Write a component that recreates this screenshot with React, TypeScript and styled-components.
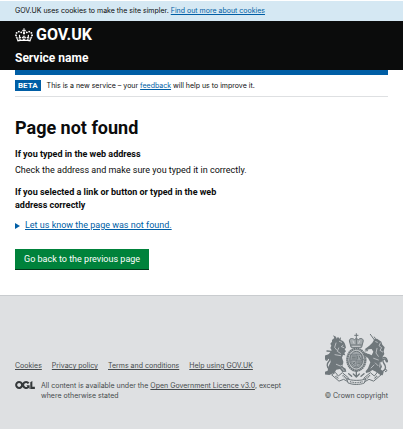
import React from 'react';
import styled, { createGlobalStyle } from 'styled-components';

const GlobalStyle = createGlobalStyle`
  * { box-sizing: border-box; }
  html { background: #dee0e2; }
  body {
    margin: 0;
    background: #fff;
    color: #0b0c0c;
    font-family: Roboto, Arial, sans-serif;
    font-size: 9px;
    line-height: 13px;
  }
  h1, h2, p, ul { margin: 0; padding: 0; }
`;

const Link = styled.a`
  color: #005ea5;
  text-decoration: underline;
`;

const CookieBanner = styled.div`
  padding: 5px 15px;
  border-top: 1px solid #fff;
  background: #d5e8f3;
  font-family: Inter, Arial, sans-serif;
  font-size: 7px;
  line-height: 10px;
`;

const Header = styled.header`
  padding: 5px 15px 4px;
  background: #0b0c0c;
`;

const LogoLink = styled.a`
  display: flex;
  align-items: center;
  gap: 3px;
  width: max-content;
  color: #fff;
  font-size: 16px;
  font-weight: 700;
  line-height: 18px;
  text-decoration: none;
`;

const ServiceLink = styled.a`
  display: block;
  width: max-content;
  margin-top: 6px;
  color: #fff;
  font-size: 12px;
  font-weight: 700;
  line-height: 16px;
  text-decoration: none;
`;

const Container = styled.div`
  margin: 0 15px;
`;

const HeaderBar = styled.div`
  height: 5px;
  background: #005ea5;
`;

const PhaseBanner = styled.div`
  display: flex;
  align-items: center;
  gap: 6px;
  padding: 5px 0;
  border-bottom: 1px solid #dee0e2;
  font-family: Inter, Arial, sans-serif;
  font-size: 7px;
  line-height: 11px;
`;

const PhaseTag = styled.strong`
  padding: 0 3px;
  background: #005ea5;
  color: #fff;
  font-family: Roboto, Arial, sans-serif;
  font-size: 8px;
`;

const Main = styled.main`
  padding: 19px 0 25px;
`;

const Title = styled.h1`
  margin-bottom: 8px;
  font-size: 18px;
  font-weight: 700;
  line-height: 24px;
`;

const Subtitle = styled.h2`
  max-width: 230px;
  font-size: 9px;
  font-weight: 700;
`;

const Paragraph = styled.p`
  margin: 3px 0 9px;
`;

const Details = styled.details`
  margin: 7px 0 17px;
`;

const Summary = styled.summary`
  display: flex;
  align-items: center;
  gap: 5px;
  width: max-content;
  color: #005ea5;
  cursor: pointer;
  list-style: none;
`;

const SummaryText = styled.span`
  text-decoration: underline;
`;

const Button = styled.button`
  display: block;
  padding: 4px 9px;
  border: 0;
  background: #00823b;
  box-shadow: inset 0 -1px 0 #003618;
  color: #fff;
  font: inherit;
  cursor: pointer;
`;

const Footer = styled.footer`
  display: flex;
  justify-content: space-between;
  align-items: flex-end;
  gap: 20px;
  padding: 37px 15px 28px;
  border-top: 1px solid #c9cccf;
  background: #dee0e2;
  color: #454a4c;
  font-family: Inter, Arial, sans-serif;
  font-size: 7px;
  line-height: 10px;
`;

const FooterMeta = styled.div`
  flex: 1;
`;

const FooterLinks = styled.ul`
  display: flex;
  flex-wrap: wrap;
  gap: 4px 10px;
  margin-bottom: 10px;
  list-style: none;
`;

const FooterLink = styled.a`
  color: #454a4c;
`;

const Licence = styled.div`
  display: flex;
  align-items: flex-start;
  gap: 6px;
`;

const LicenceText = styled.div`
  flex: 1;
  max-width: 260px;
`;

const Copyright = styled.a`
  display: flex;
  flex-direction: column;
  align-items: flex-end;
  gap: 6px;
  color: #454a4c;
  text-decoration: none;
`;

const Crown = () => (
  <svg width="18" height="14" viewBox="0 0 132 97" fill="#fff" aria-hidden="true">
    <path
      fillRule="evenodd"
      d="M25 30.2c3.5 1.5 7.7-.2 9.1-3.7 1.5-3.6-.2-7.8-3.9-9.2-3.6-1.4-7.6.3-9.1 3.9-1.4 3.5.3 7.5 3.9 9zM9 39.5c3.6 1.5 7.8-.2 9.2-3.7 1.5-3.6-.2-7.8-3.9-9.1-3.6-1.5-7.6.2-9.1 3.8-1.4 3.5.3 7.5 3.8 9zM4.4 57.2c3.5 1.5 7.7-.2 9.1-3.8 1.5-3.6-.2-7.7-3.9-9.1-3.5-1.5-7.6.3-9.1 3.8-1.4 3.5.3 7.6 3.9 9.1zm38.3-21.4c3.5 1.5 7.7-.2 9.1-3.8 1.5-3.6-.2-7.7-3.9-9.1-3.6-1.5-7.6.3-9.1 3.8-1.3 3.6.4 7.7 3.9 9.1zm64.4-5.6c-3.6 1.5-7.8-.2-9.1-3.7-1.5-3.6.2-7.8 3.8-9.2 3.6-1.4 7.7.3 9.2 3.9 1.3 3.5-.4 7.5-3.9 9zm15.9 9.3c-3.6 1.5-7.7-.2-9.1-3.7-1.5-3.6.2-7.8 3.7-9.1 3.6-1.5 7.7.2 9.2 3.8 1.5 3.5-.3 7.5-3.8 9zm4.7 17.7c-3.6 1.5-7.8-.2-9.2-3.8-1.5-3.6.2-7.7 3.9-9.1 3.6-1.5 7.7.3 9.2 3.8 1.3 3.5-.4 7.6-3.9 9.1zM89.3 35.8c-3.6 1.5-7.8-.2-9.2-3.8-1.4-3.6.2-7.7 3.9-9.1 3.6-1.5 7.7.3 9.2 3.8 1.4 3.6-.3 7.7-3.9 9.1zM69.7 17.7l8.9 4.7V9.3l-8.9 2.8c-.2-.3-.5-.6-.9-.9L72.4 0H59.6l3.5 11.2c-.3.3-.6.5-.9.9l-8.8-2.8v13.1l8.8-4.7c.3.3.6.7.9.9l-5 15.4v.1c-.2.8-.4 1.6-.4 2.4 0 4.1 3.1 7.5 7 8.1h.2c.3 0 .7.1 1 .1.4 0 .7 0 1-.1h.2c4-.6 7.1-4.1 7.1-8.1 0-.8-.1-1.7-.4-2.4V34l-5.1-15.4c.4-.2.7-.6 1-.9zM66 92.8c16.9 0 32.8 1.1 47.1 3.2 4-16.9 8.9-26.7 14-33.5l-9.6-3.4c1 4.9 1.1 7.2 0 10.2-1.5-1.4-3-4.3-4.2-8.7L108.6 76c2.8-2 5-3.2 7.5-3.3-4.4 9.4-10 11.9-13.6 11.2-4.3-.8-6.3-4.6-5.6-7.9 1-4.7 5.7-5.9 8-.5 4.3-8.7-3-11.4-7.6-8.8 7.1-7.2 7.9-13.5 2.1-21.1-8 6.1-8.1 12.3-4.5 20.8-4.7-5.4-12.1-2.5-9.5 6.2 3.4-5.2 7.9-2 7.2 3.1-.6 4.3-6.4 7.8-13.5 7.2-10.3-.9-10.9-8-11.2-13.8 2.5-.5 7.1 1.8 11 7.3L80.2 60c-4.1 4.4-8 5.3-12.3 5.4 1.4-4.4 8-11.6 8-11.6H55.5s6.4 7.2 7.9 11.6c-4.2-.1-8-1-12.3-5.4l1.4 16.4c3.9-5.5 8.5-7.7 10.9-7.3-.3 5.8-.9 12.8-11.1 13.8-7.2.6-12.9-2.9-13.5-7.2-.7-5 3.8-8.3 7.1-3.1 2.7-8.7-4.6-11.6-9.4-6.2 3.7-8.5 3.6-14.7-4.6-20.8-5.8 7.6-5 13.9 2.2 21.1-4.7-2.6-11.9.1-7.7 8.8 2.3-5.5 7.1-4.2 8.1.5.7 3.3-1.3 7.1-5.7 7.9-3.5.7-9-1.8-13.5-11.2 2.5.1 4.7 1.3 7.5 3.3l-4.7-15.4c-1.2 4.4-2.7 7.2-4.3 8.7-1.1-3-.9-5.3 0-10.2l-9.5 3.4c5 6.9 9.9 16.7 14 33.5 14.8-2.1 30.8-3.2 47.7-3.2z"
    />
  </svg>
);

const LicenceLogo = () => (
  <svg width="20" height="8" viewBox="0 0 483.2 195.7" fill="#35393b" role="img" aria-label="Open Government Licence">
    <path d="M421.5 142.8V.1l-50.7 32.3v161.1h112.4v-50.7zm-122.3-9.6A47.12 47.12 0 0 1 221 97.8c0-26 21.1-47.1 47.1-47.1 16.7 0 31.4 8.7 39.7 21.8l42.7-27.2A97.63 97.63 0 0 0 268.1 0c-36.5 0-68.3 20.1-85.1 49.7A98 98 0 0 0 97.8 0C43.9 0 0 43.9 0 97.8s43.9 97.8 97.8 97.8c36.5 0 68.3-20.1 85.1-49.7a97.76 97.76 0 0 0 149.6 25.4l19.4 22.2h3v-87.8h-80l24.3 27.5zM97.8 145c-26 0-47.1-21.1-47.1-47.1s21.1-47.1 47.1-47.1 47.1 21.1 47.1 47.1S123.8 145 97.8 145" />
  </svg>
);

const RoyalArms = () => (
  <svg width="63" height="52" viewBox="29 23 189 156" fill="none" stroke="#6f777b" strokeWidth="3" strokeLinecap="round" strokeLinejoin="round" aria-hidden="true">
    {/* crown */}
    <path fill="#a4aaad" d="M107 65l-4-15c-4-10 8-14 14-7l6-4 6 4c6-7 18-3 14 7l-4 15zM123 25v13M118 30h10" />
    <path d="M108 59h30M123 41v15" />
    <path stroke="#dee0e2" strokeWidth="2" d="M113 47l3 7M133 47l-3 7M112 63h22" />
    {/* garter and shield */}
    <ellipse cx="123" cy="103" rx="27" ry="33" fill="#c2c6c8" strokeWidth="7" strokeDasharray="5 1" strokeLinecap="butt" />
    <ellipse cx="123" cy="103" rx="20" ry="25" strokeWidth="3" fill="#a4aaad" />
    <path d="M107 87h32v22c0 8-9 13-16 16-7-3-16-8-16-16zM123 87v37M107 105h32" strokeWidth="2" />
    <path d="M111 92h9M111 97h9M111 101h9M127 92v9M132 92l4 9M112 110l7 8M119 110l-7 7M127 110h9M127 115h7" strokeWidth="3" />
    {/* lion */}
    <path fill="#6f777b" stroke="none" d="M62 34l2 6 4-6 4 6 5-5-1 9c8 2 12 8 14 15l2 8-4 5 4 6-5 5 3 7-7-1-3 8 4 12-2 15 9 6 2 9-12 1-7-9-11 2-6 9-15 7-14-2-3-6 12-5 2-12 7-14-2-10-12 1-7 7-4-2 3-7-5-3 8-5 13-4 9-12-4-7 3-7-3-6 5-6 0-5 7-6-4-8z" />
    <path stroke="#dee0e2" strokeWidth="2" d="M72 48l7 3M83 60l-5 4 8 3M62 53l-4 13 6 8M70 68l-4 10 9 6M59 88l17 3M63 117l12 5 8-3M79 128l7 8" />
    <path d="M43 132c-11-6-8-18-2-24 6-8-2-15-5-6-3 5-5 2-4-4M48 78l-13-1M45 87l-10 6" strokeWidth="4" />
    {/* unicorn */}
    <path fill="#6f777b" stroke="none" d="M162 61l9-9 6-10 8-2 13 9 3 9 7 8-3 12 2 8-5 8 1 10-7 9 4 11-4 8 9 8-3 10-14-2-6-9-11-5-8 6-11 3-1-5 7-9 7-18-7-13-13-9 0-6 16 3 8 4 5-11-5-8-8 1-8 3-5-3z" />
    <path d="M165 27l13 18M177 35l5 8" strokeWidth="3" />
    <path stroke="#dee0e2" strokeWidth="2" d="M181 49l5 2M195 53l-4 8 8 6-5 8 8 5M185 69l-3 14 7 10M175 99l14 5M180 113l8 8M195 111l-2 14M176 119l-9 9" />
    <path d="M203 137c12-5 7-17 2-24-6-10 3-17 7-7 2 6 6 4 3-3-2-6-8-8-11-6" strokeWidth="4" />
    <path d="M156 87l-8-5M157 76l-8 1M188 136c8 7 17 2 23-5l4 5-5 3" />
    {/* motto scroll */}
    <path fill="#dee0e2" d="M50 148l10-7 9 11 12-10 19 16 1 13-16-9-13 5zM196 148l-10-7-9 11-12-10-19 16-1 13 16-9 13 5z" />
    <path d="M61 152l8 8M82 150l14 12M185 152l-8 8M164 150l-14 12" strokeWidth="5" strokeDasharray="3 2" strokeLinecap="butt" />
    <path fill="#dee0e2" d="M95 160c9 7 47 7 56 0l-4 13c-13 6-35 6-48 0z" />
    <path d="M104 169c12 4 26 4 38 0" strokeWidth="4" strokeDasharray="3 2" strokeLinecap="butt" />
    <path d="M100 145l9 8M146 145l-9 8M114 146l9 9 9-9M123 137v16" strokeWidth="4" />
  </svg>
);

const footerItems = ['Cookies', 'Privacy policy', 'Terms and conditions', 'Help using GOV.UK'];

export default function App() {
  return (
    <>
      <GlobalStyle />
      <CookieBanner>
        GOV.UK uses cookies to make the site simpler. <Link href="#cookies">Find out more about cookies</Link>
      </CookieBanner>
      <Header>
        <LogoLink href="#home"><Crown />GOV.UK</LogoLink>
        <ServiceLink href="#service">Service name</ServiceLink>
      </Header>
      <Container>
        <HeaderBar />
        <PhaseBanner>
          <PhaseTag>BETA</PhaseTag>
          <span>This is a new service – your <Link href="#feedback">feedback</Link> will help us to improve it.</span>
        </PhaseBanner>
        <Main>
          <Title>Page not found</Title>
          <Subtitle>If you typed in the web address</Subtitle>
          <Paragraph>Check the address and make sure you typed it in correctly.</Paragraph>
          <Subtitle>If you selected a link or button or typed in the web address correctly</Subtitle>
          <Details>
            <Summary>
              <svg width="5" height="6" viewBox="0 0 5 6" aria-hidden="true"><path d="M0 0l5 3-5 3z" fill="#005ea5" /></svg>
              <SummaryText>Let us know the page was not found.</SummaryText>
            </Summary>
          </Details>
          <Button type="button">Go back to the previous page</Button>
        </Main>
      </Container>
      <Footer>
        <FooterMeta>
          <FooterLinks>
            {footerItems.map((item) => (
              <li key={item}><FooterLink href="#footer">{item}</FooterLink></li>
            ))}
          </FooterLinks>
          <Licence>
            <LicenceLogo />
            <LicenceText>
              All content is available under the <FooterLink href="#licence">Open Government Licence v3.0</FooterLink>, except where otherwise stated
            </LicenceText>
          </Licence>
        </FooterMeta>
        <Copyright href="#copyright">
          <RoyalArms />
          <span>© Crown copyright</span>
        </Copyright>
      </Footer>
    </>
  );
}
